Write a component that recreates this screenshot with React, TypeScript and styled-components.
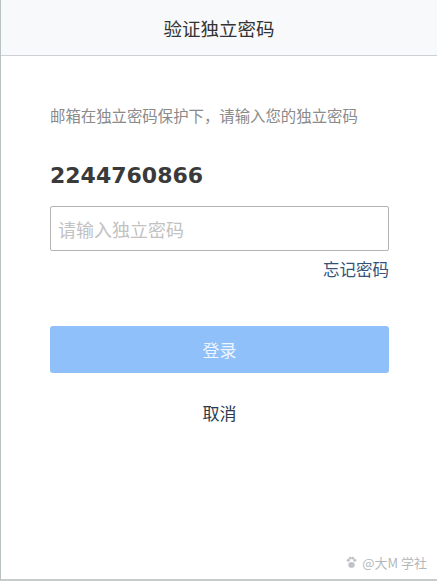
import React, { ReactElement, useState } from "react";
import styled, { createGlobalStyle } from "styled-components";

const GlobalStyle = createGlobalStyle`
    html, body {
        margin: 0;
        padding: 0;
        background: #ffffff;
    }
    body {
        font-family: "Noto Sans CJK SC", "Microsoft YaHei", sans-serif;
    }
`;

const Page = styled.div`
    width: 437px;
    height: 581px;
    box-sizing: border-box;
    border-left: 1px solid #b9c2c0;
    border-bottom: 2px solid #c5ccca;
    display: flex;
    flex-direction: column;
    background: #ffffff;
`;

const Header = styled.div`
    height: 56px;
    box-sizing: border-box;
    background: #f8f9fb;
    border-bottom: 1px solid #cdd1d6;
    display: flex;
    align-items: center;
    justify-content: center;
    font-size: 18.5px;
    color: #333333;
`;

const Body = styled.div`
    flex: 1;
    display: flex;
    flex-direction: column;
    padding: 49px 48px 0 49px;
`;

const Hint = styled.p`
    margin: 0;
    font-size: 15.4px;
    line-height: 20px;
    color: #8a8a8a;
`;

const Account = styled.div`
    margin-top: 38px;
    font-family: "DejaVu Sans", "Open Sans", sans-serif;
    font-weight: 700;
    font-size: 22px;
    line-height: 26px;
    color: #3a3a3a;
`;

const PasswordInput = styled.input`
    margin-top: 17px;
    height: 45px;
    box-sizing: border-box;
    border: 1px solid #b4b4b4;
    border-radius: 2px;
    padding: 0 7px;
    font-family: inherit;
    font-size: 18px;
    color: #333;
    outline: none;

    &::placeholder {
        color: #c2c2c2;
    }
`;

const LinkRow = styled.div`
    display: flex;
    justify-content: flex-end;
    margin-top: 6px;
`;

const TextLink = styled.a`
    font-size: 16.5px;
    line-height: 24px;
    color: #34527a;
    text-decoration: none;
    cursor: pointer;
`;

const SubmitButton = styled.button<{ disabledLook: boolean }>`
    margin-top: 45px;
    height: 47px;
    border: none;
    border-radius: 3px;
    background: ${props => props.disabledLook ? '#8fc0f9' : '#3c8ff5'};
    color: ${props => props.disabledLook ? '#eef5ff' : '#ffffff'};
    font-family: inherit;
    font-size: 17px;
    cursor: pointer;
`;

const CancelRow = styled.div`
    display: flex;
    justify-content: center;
    margin-top: 28px;
`;

const CancelLink = styled(TextLink)`
    font-size: 17px;
    color: #2b3a4c;
`;

const Spacer = styled.div`
    flex: 1;
`;

const Watermark = styled.div`
    display: flex;
    justify-content: flex-end;
    align-items: center;
    gap: 4px;
    padding: 0 4px 7px 0;
    font-size: 13px;
    color: #b4b8bc;
    margin-right: -42px;
`;

const PawIcon = () => (
    <svg width="13" height="13" viewBox="0 0 12 12" fill="#bfc3c7">
        <circle cx="3" cy="4" r="1.4" />
        <circle cx="9" cy="4" r="1.4" />
        <circle cx="4.8" cy="2" r="1.3" />
        <circle cx="7.2" cy="2" r="1.3" />
        <ellipse cx="6" cy="8.2" rx="3" ry="2.6" />
    </svg>
);

export default function App(): ReactElement {
    const [pwd, setPwd] = useState("");

    return (
        <>
            <GlobalStyle />
            <Page>
                <Header>验证独立密码</Header>
                <Body>
                    <Hint>邮箱在独立密码保护下，请输入您的独立密码</Hint>
                    <Account>2244760866</Account>
                    <PasswordInput type="password" placeholder="请输入独立密码" value={pwd} onChange={(e) => setPwd(e.target.value)} />
                    <LinkRow>
                        <TextLink>忘记密码</TextLink>
                    </LinkRow>
                    <SubmitButton disabledLook={pwd === ""}>登录</SubmitButton>
                    <CancelRow>
                        <CancelLink>取消</CancelLink>
                    </CancelRow>
                    <Spacer />
                    <Watermark>
                        <PawIcon />
                        <span>@大M 学社</span>
                    </Watermark>
                </Body>
            </Page>
        </>
    );
}
